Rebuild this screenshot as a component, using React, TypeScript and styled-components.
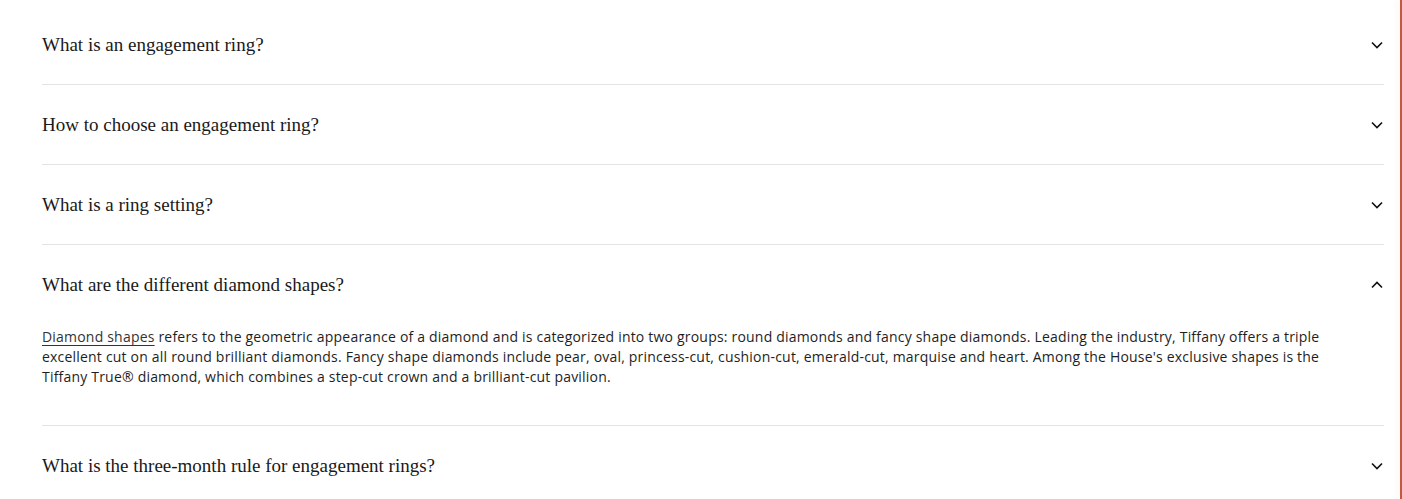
import React, { useState } from "react";
import styled, { createGlobalStyle } from "styled-components";

const GlobalStyle = createGlobalStyle`
  html, body {
    margin: 0;
    padding: 0;
    background: #ffffff;
  }
  body {
    font-family: "Liberation Serif", serif;
    color: #1b1b1b;
  }
`;

interface Faq {
  question: string;
  answer?: React.ReactNode;
}

const getFaqs = (): Faq[] => [
  { question: "What is an engagement ring?" },
  { question: "How to choose an engagement ring?" },
  { question: "What is a ring setting?" },
  {
    question: "What are the different diamond shapes?",
    answer: (
      <>
        <AnswerLink href="#">Diamond shapes</AnswerLink> refers to the geometric appearance of a
        diamond and is categorized into two groups: round diamonds and fancy shape diamonds.
        Leading the industry, Tiffany offers a triple excellent cut on all round brilliant
        diamonds. Fancy shape diamonds include pear, oval, princess-cut, cushion-cut, emerald-cut,
        marquise and heart. Among the House's exclusive shapes is the Tiffany True® diamond, which
        combines a step-cut crown and a brilliant-cut pavilion.
      </>
    ),
  },
  { question: "What is the three-month rule for engagement rings?" },
];

const Chevron = ({ open }: { open: boolean }) => (
  <ChevronSvg viewBox="0 0 12 8" $open={open}>
    <path d="M1 1.5 L6 6.5 L11 1.5" fill="none" stroke="#111" strokeWidth="1.6" />
  </ChevronSvg>
);

const App = () => {
  const [openIndex, setOpenIndex] = useState<number>(3);
  const faqs = getFaqs();
  return (
    <>
      <GlobalStyle />
      <Page>
        <FaqList>
          {faqs.map((faq, i) => {
            const open = i === openIndex;
            return (
              <Item key={faq.question} $last={i === faqs.length - 1}>
                <Header onClick={() => setOpenIndex(open ? -1 : i)}>
                  <Question>{faq.question}</Question>
                  <Chevron open={open} />
                </Header>
                {open && faq.answer && <Answer>{faq.answer}</Answer>}
              </Item>
            );
          })}
        </FaqList>
        <EdgeBar />
      </Page>
    </>
  );
};

export default App;

const Page = styled.div`
  display: flex;
  min-height: 499px;
`;

const FaqList = styled.div`
  flex: 1;
  padding: 5px 16px 0 42px;
`;

const Item = styled.div<{ $last: boolean }>`
  border-bottom: ${({ $last }) => ($last ? "none" : "1px solid #e3e3e3")};
`;

const Header = styled.button`
  display: flex;
  align-items: center;
  justify-content: space-between;
  width: 100%;
  height: 79px;
  padding: 0 1px 0 0;
  border: none;
  background: none;
  cursor: pointer;
  text-align: left;
`;

const Question = styled.span`
  font-family: "Liberation Serif", serif;
  font-size: 19px;
  color: #1a1a1a;
  letter-spacing: 0;
`;

const ChevronSvg = styled.svg<{ $open: boolean }>`
  width: 12px;
  height: 8px;
  transform: ${({ $open }) => ($open ? "rotate(180deg)" : "none")};
`;

const Answer = styled.p`
  margin: 0;
  padding: 3px 30px 38px 0;
  font-family: "Open Sans", "Liberation Sans", sans-serif;
  font-size: 14px;
  line-height: 20px;
  letter-spacing: 0.2px;
  color: #1e1e1e;
`;

const AnswerLink = styled.a`
  color: #333333;
  text-decoration: underline;
  text-decoration-thickness: 1px;
  text-underline-offset: 3px;
`;

const EdgeBar = styled.div`
  width: 2px;
  background: #c4573e;
  box-shadow: -3px 0 5px rgba(196, 87, 62, 0.08);
`;
